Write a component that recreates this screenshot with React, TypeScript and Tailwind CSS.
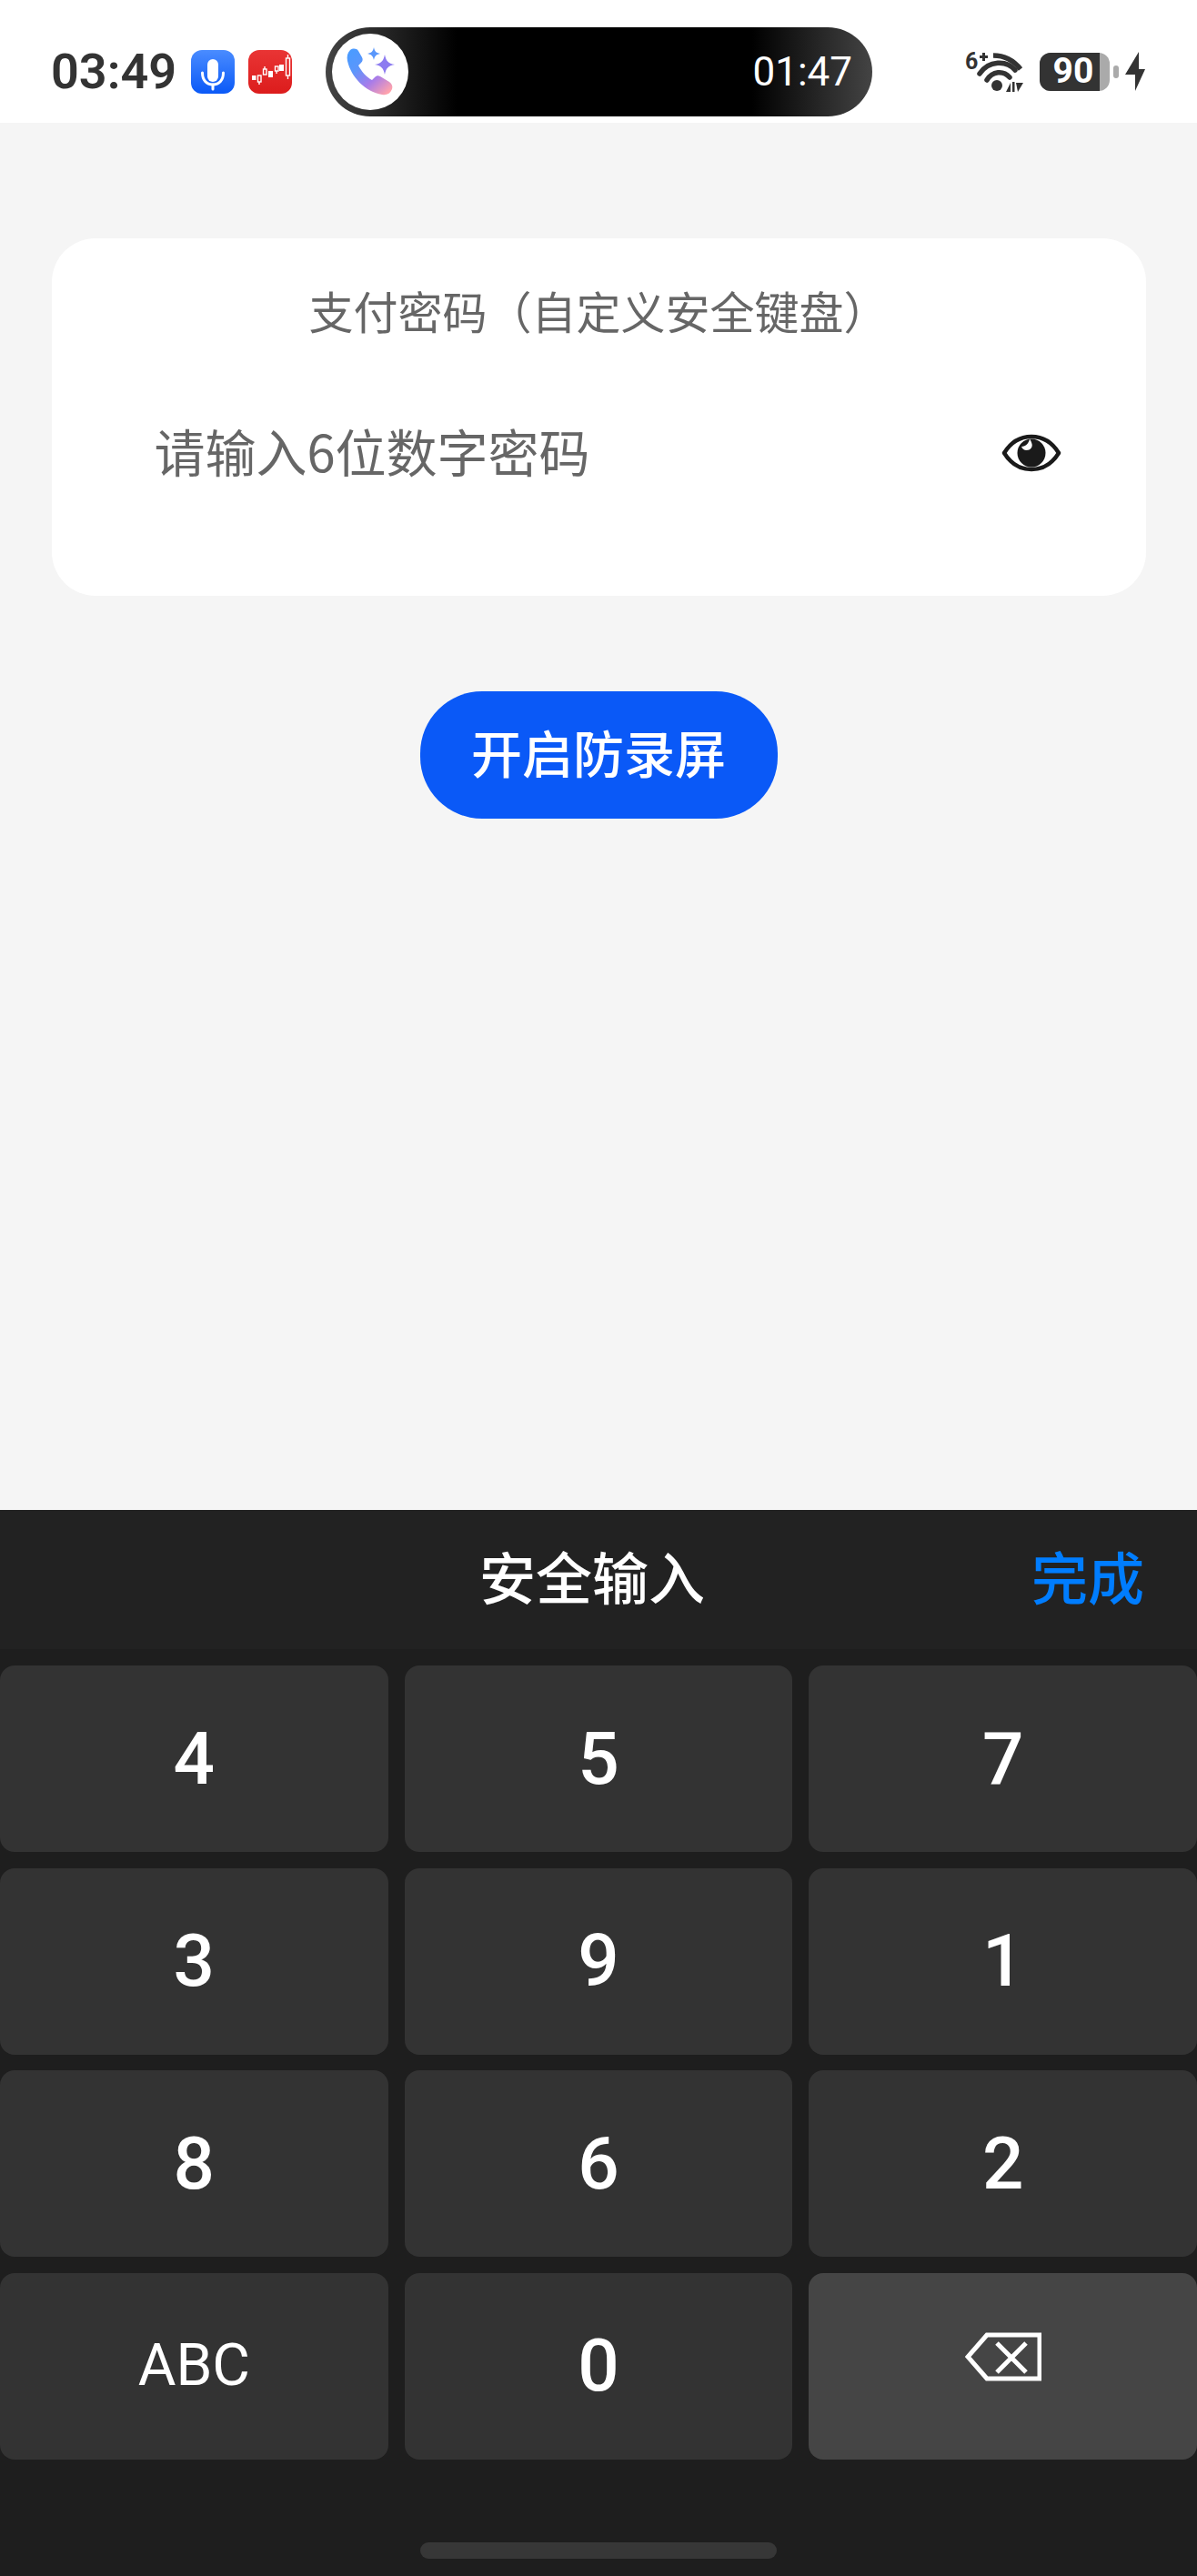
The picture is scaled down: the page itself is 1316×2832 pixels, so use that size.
import React from 'react';

const cjk = '"Noto Sans CJK SC", "Noto Sans", sans-serif';

const MicIcon = () => (
  <svg width="48" height="48" viewBox="0 0 48 48" className="shrink-0">
    <defs>
      <linearGradient id="micBg" x1="0" y1="0" x2="0" y2="1">
        <stop offset="0" stopColor="#4a8cff" />
        <stop offset="1" stopColor="#0a59f7" />
      </linearGradient>
    </defs>
    <rect width="48" height="48" rx="12" fill="url(#micBg)" />
    <rect x="18" y="10" width="12" height="25" rx="6" fill="#fff" />
    <path d="M12.5 25c0 8 4.500 13 11.500 13s11.500-5 11.500-13" fill="none" stroke="#fff" strokeWidth="3" strokeLinecap="round" />
    <path d="M24 38v5" stroke="#fff" strokeWidth="3" strokeLinecap="round" />
  </svg>
);

const StockIcon = () => (
  <svg width="48" height="48" viewBox="0 0 48 48" className="shrink-0">
    <defs>
      <linearGradient id="stockBg" x1="0" y1="0" x2="0" y2="1">
        <stop offset="0" stopColor="#e93434" />
        <stop offset="1" stopColor="#dc1c1c" />
      </linearGradient>
    </defs>
    <rect width="48" height="48" rx="12" fill="url(#stockBg)" />
    <g fill="#fff">
      <rect x="4" y="28" width="4.500" height="5" />
      <rect x="22" y="23" width="5" height="7" />
      <rect x="34" y="16" width="5" height="7" />
    </g>
    <g fill="none" stroke="#fff" strokeWidth="1.4">
      <rect x="10.500" y="28" width="3.500" height="7" />
      <rect x="16.500" y="21" width="3.500" height="6" />
      <rect x="29.500" y="18" width="3.500" height="5" />
      <rect x="41.500" y="9" width="4" height="19" />
      <path d="M12 35v3M18 18v3M31 23v3M43.500 5v4M43.500 28v4" />
    </g>
  </svg>
);

const CallIcon = () => (
  <div className="w-[84px] h-[84px] rounded-full bg-white flex items-center justify-center shrink-0">
    <svg width="84" height="84" viewBox="0 0 84 84">
      <defs>
        <linearGradient id="callGrad" x1="0.1" y1="0.05" x2="0.9" y2="0.95">
          <stop offset="0" stopColor="#4b9bff" />
          <stop offset="0.3" stopColor="#5b96fb" />
          <stop offset="0.65" stopColor="#a67bea" />
          <stop offset="1" stopColor="#ffa2ac" />
        </linearGradient>
      </defs>
      <path
        d="M20 18c3-2 7-2 9 1l4 7c1 2 1 4-1 6l-3 3c3 6 9 13 15 16l3-3c2-2 4-2 6-1l10 6c3 2 4 5 3 8-2 5-6 7-11 6C37 64 21 48 17 30c-1-5 0-9 3-12z"
        fill="url(#callGrad)"
      />
      <path d="M46 15c1 4 2 6 7 7-5 1-6 3-7 7-1-4-2-6-7-7 5-1 6-3 7-7z" fill="#5a97fb" />
      <path d="M58 23c1.500 7 3.500 9.500 11 11-7.500 1.500-9.500 4-11 11-1.500-7-3.500-9.500-11-11 7.500-1.500 9.500-4 11-11z" fill="#8d7cf0" />
    </svg>
  </div>
);

const WifiIcon = () => (
  <svg width="64" height="44" viewBox="0 0 64 44" className="shrink-0 overflow-visible">
    <g fill="none" stroke="#333" strokeLinecap="round" strokeWidth="5.500">
      <path d="M31 4c12 0 22 5 30 15" strokeLinecap="butt" />
      <path d="M16 24c10-15 30-15 39-4" />
      <path d="M24 31c6-10 18-11 25-3" />
    </g>
    <circle cx="35" cy="37" r="6" fill="#333" />
    <text x="0" y="19" fontSize="25" fontWeight="700" fill="#333" fontFamily="Roboto, sans-serif">6</text>
    <path d="M19 1h3v3h3v3h-3v3h-3V7h-3V4h3z" fill="#333" />
    <path d="M45 44l5-10v10zM52 33h2.500v11H52z" fill="#333" />
    <path d="M56 34h8l-6 10z" fill="#333" />
  </svg>
);

const BatteryIcon = () => (
  <div className="flex items-center shrink-0">
    <div className="w-[77px] h-[42px] rounded-[12px] flex bg-[#aaaaaa]">
      <div className="w-[66px] h-full rounded-l-[12px] bg-[#333333] flex items-center justify-center pl-[8px]">
        <span className="text-white text-[39px] font-bold leading-none font-['Roboto',sans-serif]">90</span>
      </div>
    </div>
    <div className="ml-[4px] w-[6px] h-[14px] rounded-[3px] bg-[#aaaaaa]" />
    <svg width="22" height="43" viewBox="0 0 22 43" className="ml-[7px]">
      <path d="M15 0v19h7L11 43V25H0z" fill="#333" />
    </svg>
  </div>
);

const EyeIcon = () => (
  <svg width="66" height="42" viewBox="0 0 66 42">
    <path d="M3 21C11 8 22 3 33 3s22 5 30 18c-8 13-19 18-30 18S11 34 3 21z" fill="none" stroke="#1a1a1a" strokeWidth="4.500" strokeLinejoin="round" />
    <circle cx="33" cy="21" r="15.500" fill="#1a1a1a" />
    <path d="M31 5.500c-1 5-4 8-9 8.500 1 2.500 3 4 5.500 4 4.500 0 7-3.500 6-7-.5-2-1.500-4-2.500-5.500z" fill="#fff" />
  </svg>
);

const BackspaceIcon = () => (
  <svg width="84" height="54" viewBox="0 0 84 54">
    <path d="M82 3H24L3 27l21 24h58z" fill="none" stroke="#fff" strokeWidth="5" strokeLinejoin="miter" />
    <path d="M35 12l32 32M67 12L35 44" fill="none" stroke="#fff" strokeWidth="5" />
  </svg>
);

const KEYS = ['4', '5', '7', '3', '9', '1', '8', '6', '2'];

const Key = ({ label }: { label: string }) => (
  <div className="h-[205px] rounded-[16px] bg-[#333333] flex items-center justify-center text-white text-[80px] font-medium leading-none font-['Roboto',sans-serif]">
    {label}
  </div>
);

export default function App() {
  return (
    <div className="w-[1316px] h-[2832px] flex flex-col bg-[#f5f5f5] overflow-hidden" style={{ fontFamily: cjk }}>
      {/* status bar */}
      <div className="h-[135px] bg-white flex items-start shrink-0">
        <div className="flex items-center h-[48px] mt-[55px] ml-[56px] gap-[15px]">
          <span className="text-[#333333] text-[54px] font-semibold leading-none w-[139px] font-['Roboto',sans-serif]">03:49</span>
          <MicIcon />
          <StockIcon />
        </div>
        <div className="ml-[37px] mt-[30px] w-[601px] h-[98px] rounded-[49px] bg-[linear-gradient(90deg,#444444_0%,#000000_24%,#000000_78%,#444444_100%)] flex items-center pl-[7px] pr-[22px] justify-between">
          <CallIcon />
          <span className="text-white text-[44px] leading-none font-['Roboto',sans-serif]">01:47</span>
        </div>
        <div className="ml-[102px] mt-[57px] flex items-start gap-[18px]">
          <WifiIcon />
          <BatteryIcon />
        </div>
      </div>

      {/* form */}
      <div className="flex-1 flex flex-col items-center pt-[127px]">
        <div className="w-[1203px] h-[393px] bg-white rounded-[48px] flex flex-col">
          <div className="text-center text-[#666666] text-[49px] leading-none pt-[54px]">支付密码（自定义安全键盘）</div>
          <div className="flex items-center justify-between pl-[113px] pr-[93px] mt-[102px]">
            <span className="text-[#666666] text-[56px] leading-none pb-[5px]">请输入6位数字密码</span>
            <EyeIcon />
          </div>
        </div>
        <button className="mt-[105px] w-[393px] h-[140px] rounded-[68px] bg-[#0a59f7] text-white text-[56px] font-medium leading-none pb-[9px]">
          开启防录屏
        </button>
      </div>

      {/* keyboard */}
      <div className="h-[1172px] bg-[#1e1e1e] shrink-0 flex flex-col">
        <div className="h-[153px] bg-[#222222] flex items-center justify-between pl-[527px] pr-[58px] pb-[10px] shrink-0">
          <span className="text-white text-[62px] font-medium leading-none">安全输入</span>
          <span className="text-[#007dff] text-[62px] font-medium leading-none">完成</span>
        </div>
        <div className="grid grid-cols-3 gap-x-[18px] gap-y-[17.5px] mt-[18px]">
          {KEYS.map((k) => (
            <Key key={k} label={k} />
          ))}
          <div className="h-[205px] rounded-[16px] bg-[#333333] flex items-center justify-center text-white text-[64px] leading-none font-['Roboto',sans-serif]">
            ABC
          </div>
          <Key label="0" />
          <div className="h-[205px] rounded-[16px] bg-[#454545] flex items-center justify-center pb-[20px]">
            <BackspaceIcon />
          </div>
        </div>
        <div className="mt-[91px] mx-auto w-[392px] h-[18px] rounded-[9px] bg-[#373737]" />
      </div>
    </div>
  );
}
